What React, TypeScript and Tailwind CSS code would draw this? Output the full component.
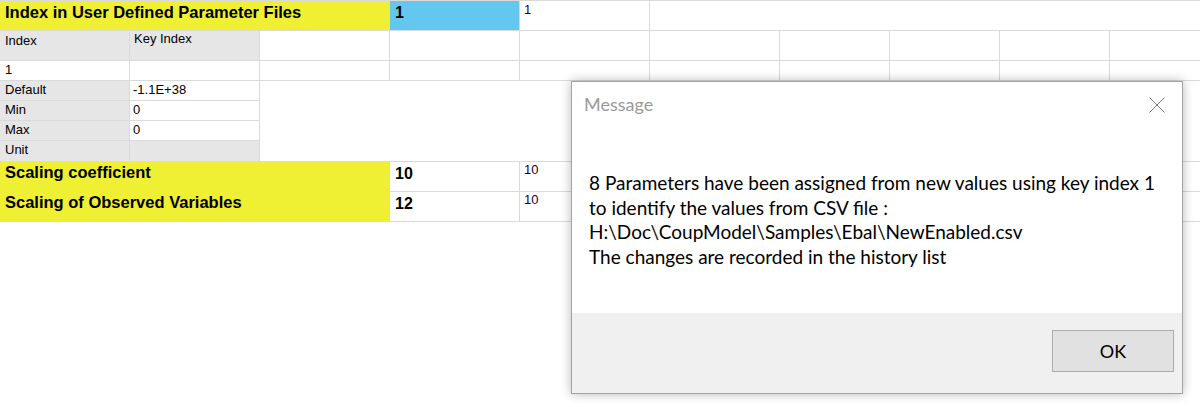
const line = 'border-[#dadada]';

const FillCells = () => (
  <>
    <div className={`w-[130px] border-r ${line}`} />
    <div className={`w-[130px] border-r ${line}`} />
    <div className={`w-[130px] border-r ${line}`} />
    <div className={`w-[130px] border-r ${line}`} />
    <div className={`w-[110px] border-r ${line}`} />
    <div className={`w-[110px] border-r ${line}`} />
    <div className={`w-[110px] border-r ${line}`} />
    <div className="flex-1" />
  </>
);

const props = [
  { label: 'Default', value: '-1.1E+38', grey: false },
  { label: 'Min', value: '0', grey: false },
  { label: 'Max', value: '0', grey: false },
  { label: 'Unit', value: '', grey: true },
];

const ScalingRow = ({ label, value, orig }: { label: string; value: string; orig: string }) => (
  <div className={`flex h-[30px] border-b ${line}`}>
    <div className={`w-[390px] bg-[#efef33] border-r ${line} pl-[5px] text-[16.5px] leading-[20px] font-bold`}>{label}</div>
    <div className={`w-[130px] border-r ${line} pl-[5px] text-[16px] leading-[24px] font-bold`}>{value}</div>
    <div className={`w-[130px] border-r ${line} pl-[4px] text-[13px] leading-[15px] text-[#14002e]`}>{orig}</div>
    <div className="flex-1" />
  </div>
);

export default function App() {
  return (
    <div className="relative w-[1200px] h-[407px] overflow-hidden bg-white text-black font-['Liberation_Sans',Arial,sans-serif]">
      <div className={`flex h-[31px] border-y ${line}`}>
        <div className="w-[390px] bg-[#efef33] pl-[5px] text-[16.5px] leading-[22px] font-bold">Index in User Defined Parameter Files</div>
        <div className={`w-[130px] bg-[#63c7f0] border-r ${line} pl-[5px] text-[16px] leading-[24px] font-bold`}>1</div>
        <div className={`w-[130px] border-r ${line} pl-[4px] text-[13px] leading-[18px] text-[#14002e]`}>1</div>
        <div className="flex-1" />
      </div>

      <div className={`flex h-[30px] border-b ${line} text-[13px]`}>
        <div className={`w-[130px] bg-[#e6e6e6] border-r ${line} pl-[5px] leading-[20px]`}>Index</div>
        <div className={`w-[130px] bg-[#e6e6e6] border-r ${line} pl-[4px] leading-[16px]`}>Key Index</div>
        <FillCells />
      </div>

      <div className={`flex h-[20px] border-b ${line} text-[13px] leading-[18px]`}>
        <div className={`w-[130px] border-r ${line} pl-[5px]`}>1</div>
        <div className={`w-[130px] border-r ${line}`} />
        <FillCells />
      </div>

      <div className={`flex border-b ${line} text-[13px] leading-[18px]`}>
        <div className="w-[260px] flex flex-col">
          {props.map((p, i) => (
            <div key={p.label} className={`flex h-[20px] ${i < props.length - 1 ? `border-b ${line}` : ''}`}>
              <div className={`w-[130px] bg-[#e6e6e6] border-r ${line} pl-[5px]`}>{p.label}</div>
              <div className={`w-[130px] border-r ${line} pl-[3px] ${p.grey ? 'bg-[#e6e6e6]' : ''}`}>{p.value}</div>
            </div>
          ))}
        </div>
        <div className="flex-1" />
      </div>

      <ScalingRow label="Scaling coefficient" value="10" orig="10" />
      <ScalingRow label="Scaling of Observed Variables" value="12" orig="10" />

      {/* message box */}
      <div className="absolute left-[571px] top-[81px] w-[612px] h-[313px] flex flex-col bg-white border border-[#a3a3a3] shadow-[0_0_10px_rgba(0,0,0,0.28)] font-['Lato','Noto_Sans',sans-serif]">
        <div className="flex items-start justify-between pl-[12px] pr-[17px] pt-[10px]">
          <span className="text-[18px] leading-[24px] text-[#9a9a9a]">Message</span>
          <svg width="16" height="16" viewBox="0 0 16 16" className="mt-[5px]">
            <path d="M0.5 0.5 L15.5 15.5 M15.5 0.5 L0.5 15.5" stroke="#7a7a7a" strokeWidth="1" fill="none" />
          </svg>
        </div>
        <div className="flex-1 pl-[17px] pt-[55px] text-[19px] leading-[24.5px] text-black">
          <div>8 Parameters have been assigned from new values using key index 1</div>
          <div>to identify the values from CSV file :</div>
          <div>H:\Doc\CoupModel\Samples\Ebal\NewEnabled.csv</div>
          <div>The changes are recorded in the history list</div>
        </div>
        <div className="h-[80px] bg-[#f0f0f0] flex justify-end items-start pr-[8px] pt-[17px]">
          <button className="w-[122px] h-[42px] bg-[#e1e1e1] border border-[#adadad] text-[18px] leading-[24px] text-black">OK</button>
        </div>
      </div>
    </div>
  );
}
